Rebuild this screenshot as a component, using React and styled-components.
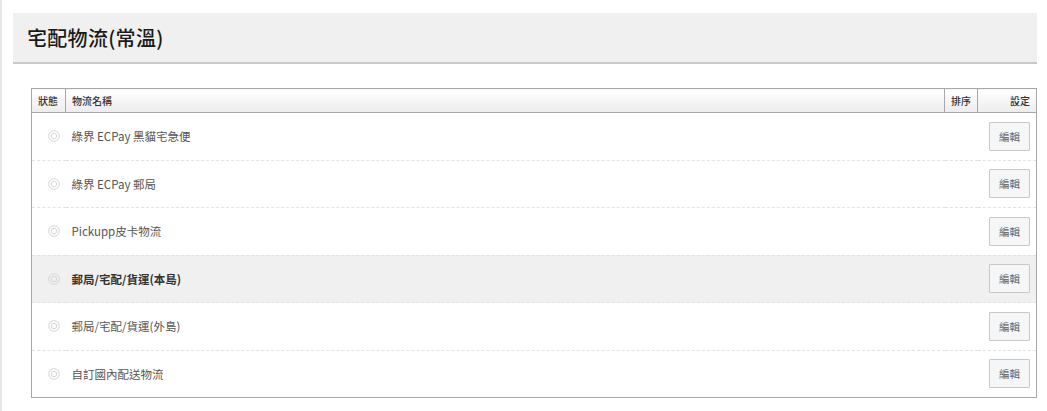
import React from 'react';
import styled, { createGlobalStyle } from 'styled-components';

const GlobalStyle = createGlobalStyle`
  html, body {
    margin: 0;
    padding: 0;
    background: #fff;
  }
  body {
    font-family: "Noto Sans CJK TC", "Noto Sans", "Liberation Sans", sans-serif;
    color: #333;
  }
`;

const rows = [
  { id: 1, name: '綠界 ECPay 黑貓宅急便' },
  { id: 2, name: '綠界 ECPay 郵局' },
  { id: 3, name: 'Pickupp皮卡物流' },
  { id: 4, name: '郵局/宅配/貨運(本島)', active: true },
  { id: 5, name: '郵局/宅配/貨運(外島)' },
  { id: 6, name: '自訂國內配送物流' },
];

const Radio = () => (
  <svg width="12" height="12" viewBox="0 0 12 12">
    <circle cx="6" cy="6" r="5.3" fill="none" stroke="#d6d6d6" strokeWidth="1" />
    <circle cx="6" cy="6" r="2.8" fill="none" stroke="#d6d6d6" strokeWidth="1" />
  </svg>
);

const App = () => (
  <Page>
    <GlobalStyle />
    <TitleBar>
      <Title>宅配物流(常溫)</Title>
    </TitleBar>
    <Table>
      <colgroup>
        <col style={{ width: 34 }} />
        <col />
        <col style={{ width: 33 }} />
        <col style={{ width: 59 }} />
      </colgroup>
      <thead>
        <tr>
          <Th>狀態</Th>
          <Th>物流名稱</Th>
          <Th>排序</Th>
          <Th $right>設定</Th>
        </tr>
      </thead>
      <tbody>
        {rows.map((row) => (
          <Row key={row.id} $active={row.active}>
            <StatusCell><Radio /></StatusCell>
            <NameCell $active={row.active}>{row.name}</NameCell>
            <Td />
            <ActionCell><EditButton>編輯</EditButton></ActionCell>
          </Row>
        ))}
      </tbody>
    </Table>
  </Page>
);

const Page = styled.div`
  border-left: 2px solid #e6e6e6;
  padding: 13px 10px 14px 11px;
  min-height: 384px;
`;
const TitleBar = styled.div`
  background: #f0f0f0;
  border-bottom: 2px solid #c9c9c9;
  height: 49px;
  display: flex;
  align-items: center;
  padding-left: 14px;
`;
const Title = styled.h1`
  margin: 0;
  font-size: 20px;
  font-weight: 500;
  color: #1a1a1a;
  letter-spacing: 0.3px;
`;
const Table = styled.table`
  margin: 24px 0 0 18px;
  width: calc(100% - 18px);
  border-collapse: collapse;
  table-layout: fixed;
  border: 1px solid #a8a8a8;
`;
const Th = styled.th`
  height: 23px;
  padding: 0 6px;
  font-size: 10px;
  font-weight: 500;
  color: #333;
  text-align: ${(p) => (p.$right ? 'right' : 'left')};
  background: linear-gradient(#ffffff, #ececec);
  border-left: 1px solid #a8a8a8;
  border-bottom: 1px solid #a8a8a8;
  white-space: nowrap;
`;
const Row = styled.tr`
  height: 47.5px;
  background: ${(p) => (p.$active ? '#f0f0f0' : '#fff')};
  border-bottom: 1px dashed #e3e3e3;

  &:last-child {
    border-bottom: none;
  }
`;
const Td = styled.td`
  padding: 0;
`;
const StatusCell = styled.td`
  padding: 0 0 0 16px;
  line-height: 0;
  overflow: visible;
  white-space: nowrap;
`;
const NameCell = styled.td`
  padding: 0 6px;
  font-size: 11.5px;
  color: ${(p) => (p.$active ? '#333' : '#555')};
  font-weight: ${(p) => (p.$active ? 700 : 400)};
  white-space: nowrap;
`;
const ActionCell = styled.td`
  padding: 0 6px 0 0;
  text-align: right;
`;
const EditButton = styled.button`
  width: 41px;
  height: 29px;
  padding: 0;
  border: 1px solid #c8c8c8;
  border-radius: 1px;
  background: #f5f6f8;
  color: #666;
  font-family: inherit;
  font-size: 10.5px;
  cursor: pointer;
`;

export default App;
